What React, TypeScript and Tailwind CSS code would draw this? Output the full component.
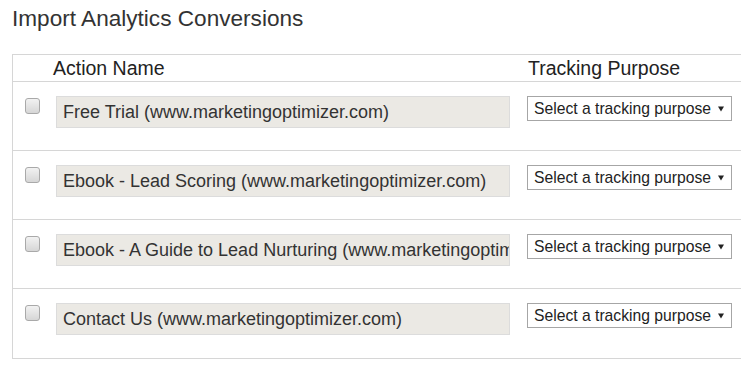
import React from "react";

// Rows of Analytics goals that can be imported as conversions
const ACTIONS = [
  "Free Trial (www.marketingoptimizer.com)",
  "Ebook - Lead Scoring (www.marketingoptimizer.com)",
  "Ebook - A Guide to Lead Nurturing (www.marketingoptimizer.com)",
  "Contact Us (www.marketingoptimizer.com)",
];

function Checkbox() {
  return (
    <div className="mt-[16px] ml-[12px] h-[16px] w-[15px] shrink-0 rounded-[3px] border border-[#a9a9a9] bg-gradient-to-b from-[#f2f2f2] to-[#d6d6d6]" />
  );
}

function PurposeSelect() {
  return (
    <div className="mt-[14px] ml-[17px] flex h-[25px] w-[205px] shrink-0 items-center justify-between border border-[#a6a6a6] bg-white pl-[6px] pr-[7px] text-[15.7px] text-[#222]">
      <span>Select a tracking purpose</span>
      <svg width="6" height="6" viewBox="0 0 6 6" className="mt-[1px]">
        <path d="M0 0.5 H6 L3 5.5 Z" fill="#222" />
      </svg>
    </div>
  );
}

function ActionRow({ name, last }: { name: string; last: boolean }) {
  return (
    <div className={`flex h-[69px] items-start ${last ? "" : "border-b border-[#d6d6d6]"}`}>
      <Checkbox />
      <div className="mt-[14px] ml-[16px] flex h-[32px] w-[454px] shrink-0 items-center overflow-hidden whitespace-nowrap border border-[#dcdcdc] bg-[#ebe9e4] pl-[6px] text-[18px] text-[#333]">
        {name}
      </div>
      <PurposeSelect />
    </div>
  );
}

export default function App() {
  return (
    <div
      className="h-[369px] w-[741px] overflow-hidden bg-white pl-[12px]"
      style={{ fontFamily: '"Liberation Sans", Arial, sans-serif' }}
    >
      <h1 className="pt-[6px] text-[22.6px] leading-[26px] text-[#333]">Import Analytics Conversions</h1>
      <div className="mt-[22px] w-[760px] border border-r-0 border-[#d6d6d6]">
        <div className="flex h-[27px] items-end border-b border-[#d6d6d6] pb-[2px] text-[19.5px] leading-[22px] text-[#222]">
          <span className="ml-[40px] w-[475px]">Action Name</span>
          <span>Tracking Purpose</span>
        </div>
        {ACTIONS.map((name, i) => (
          <ActionRow key={name} name={name} last={i === ACTIONS.length - 1} />
        ))}
      </div>
    </div>
  );
}
